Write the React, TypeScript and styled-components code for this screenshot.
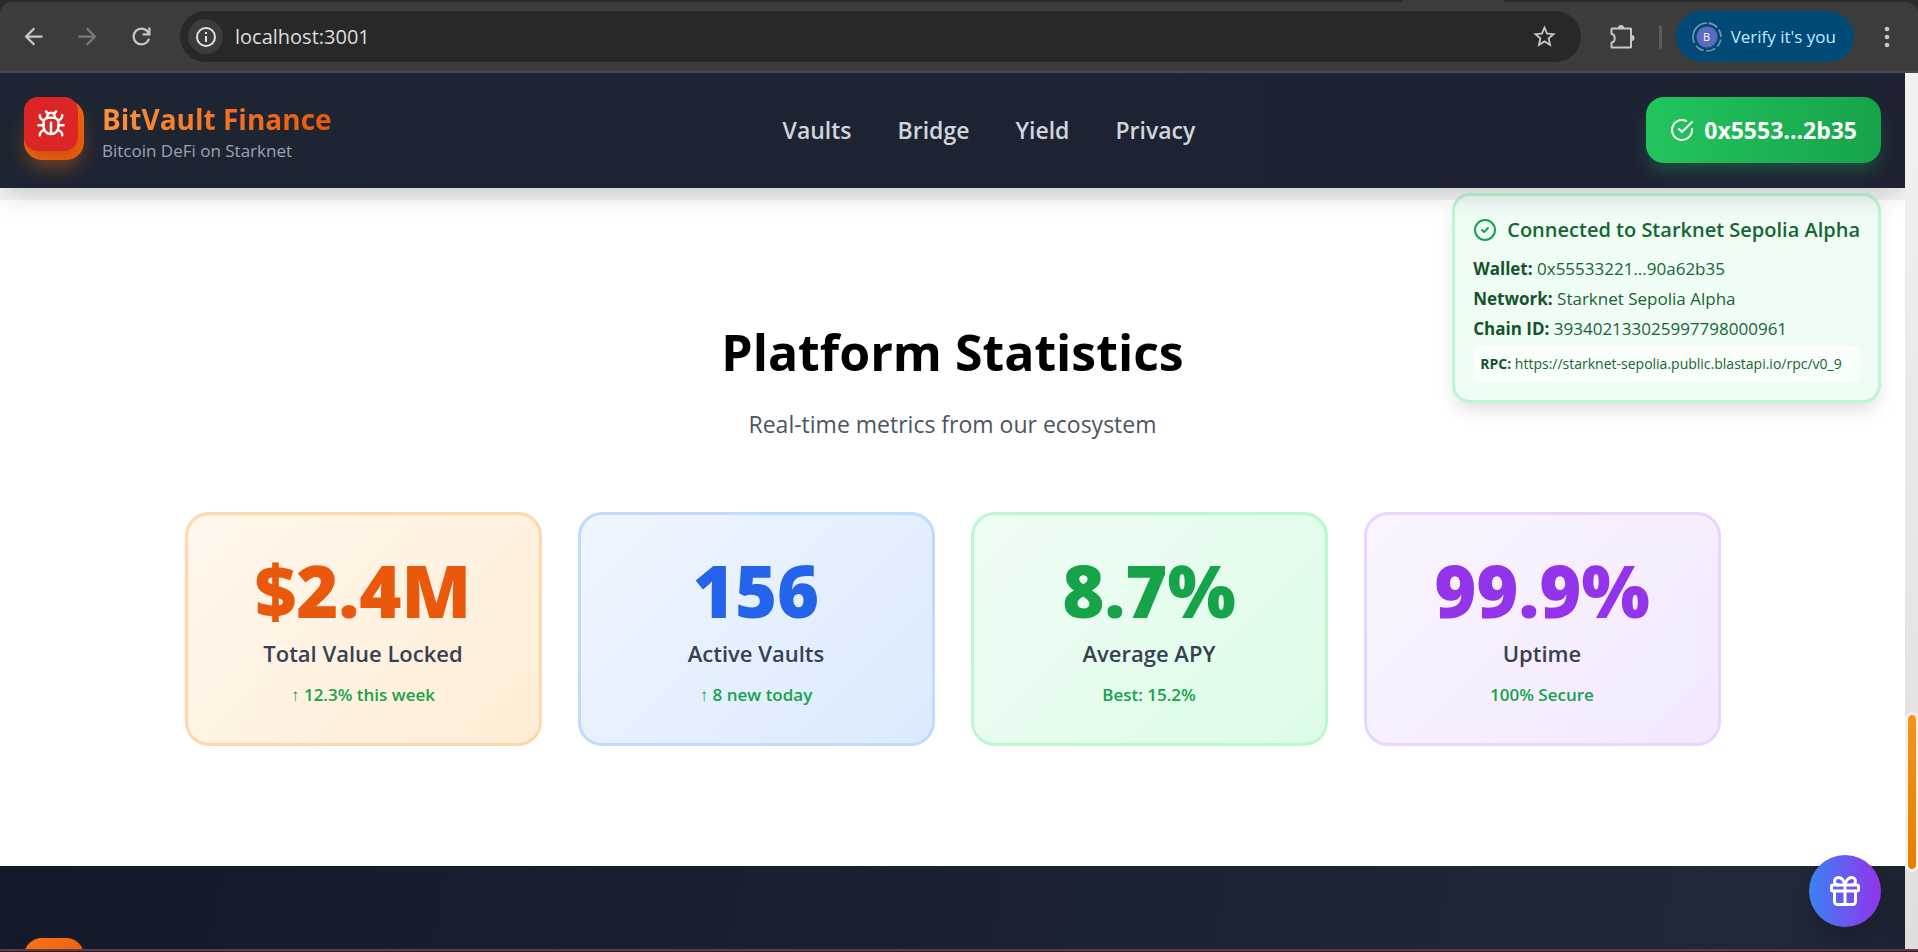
import React from 'react';
import styled, { createGlobalStyle } from 'styled-components';

const GlobalStyle = createGlobalStyle`
  *, *::before, *::after { box-sizing: border-box; }
  body {
    margin: 0;
    background: #fff;
    font-family: "Segoe UI", "Open Sans", "Noto Sans", sans-serif;
  }
  button, input { font: inherit; }
  h1, h2, p { margin: 0; }
`;

const Window = styled.div`
  display: flex;
  flex-direction: column;
  height: 100vh;
  overflow: hidden;
  background: #2b2b2b;
`;

/* Browser chrome */
const TabStrip = styled.div`
  display: flex;
  justify-content: flex-end;
  height: 2px;
  padding-right: 414px;
`;

const ActiveTab = styled.div`
  width: 102px;
  background: #3c3c3c;
`;

const Toolbar = styled.div`
  display: flex;
  align-items: center;
  height: 71px;
  padding: 0 19px 0 20px;
  border-radius: 12px 12px 0 0;
  border-bottom: 2px solid #4a4a4a;
  background: #3c3c3c;
`;

const ToolGroup = styled.div`
  display: flex;
  align-items: center;
  gap: 27px;
  margin-right: 25px;
`;

const ToolButton = styled.button<{ $dim?: boolean }>`
  display: grid;
  place-items: center;
  flex: none;
  padding: 0;
  border: 0;
  background: none;
  color: ${(p) => (p.$dim ? '#7a7a7a' : '#c7c7c7')};
`;

const AddressBar = styled.div`
  display: flex;
  align-items: center;
  flex: 1;
  height: 51px;
  padding: 0 23px 0 8px;
  border-radius: 26px;
  background: #282828;
`;

const SiteInfo = styled(ToolButton)`
  width: 35px;
  height: 35px;
  margin-right: 12px;
  border-radius: 50%;
  background: #3c3c3c;
  color: #e3e3e3;
`;

const UrlInput = styled.input`
  flex: 1;
  min-width: 0;
  padding: 0;
  border: 0;
  outline: 0;
  background: none;
  color: #dedede;
  font-size: 20px;
  line-height: 28px;
`;

const ToolbarEnd = styled.div`
  display: flex;
  align-items: center;
  margin-left: 27px;
`;

const Separator = styled.span`
  width: 3px;
  height: 24px;
  margin: 0 14px 0 23px;
  border-radius: 2px;
  background: #5c5c5c;
`;

const ProfileButton = styled.button`
  display: flex;
  align-items: center;
  gap: 8px;
  height: 51px;
  margin-right: 21px;
  padding: 0 18px 0 15px;
  border: 0;
  border-radius: 26px;
  background: #004a77;
  color: #c2e7ff;
  font-size: 17px;
  line-height: 24px;
  white-space: nowrap;
`;

const Avatar = styled.span`
  display: grid;
  place-items: center;
  width: 32px;
  height: 32px;
  color: #fff;
  font-size: 11px;
  line-height: 16px;
  > * { grid-area: 1 / 1; }
`;

/* Page */
const Viewport = styled.div`
  display: flex;
  flex: 1;
  min-height: 0;
`;

const Page = styled.div`
  position: relative;
  display: flex;
  flex: 1;
  flex-direction: column;
  min-width: 0;
  overflow: hidden;
  background: #fff;
`;

const Header = styled.header`
  position: relative;
  z-index: 2;
  display: flex;
  align-items: center;
  justify-content: space-between;
  flex: none;
  height: 115px;
  padding: 0 24px 2px;
  background: linear-gradient(90deg, #1e2532, #1e2233);
  box-shadow: 0 10px 25px -5px rgba(0, 0, 0, 0.19);
`;

const Brand = styled.div`
  display: flex;
  align-items: center;
  gap: 18px;
`;

const BrandText = styled.div`
  padding-top: 5px;
`;

const LogoBox = styled.div`
  position: relative;
  width: 60px;
  height: 60px;
  border-radius: 18px;
  background: linear-gradient(135deg, #f97316, #ea580c);
  box-shadow: 0 10px 18px -3px rgba(249, 115, 22, 0.4);
`;

const BugButton = styled.button`
  position: absolute;
  top: -3px;
  left: 0;
  display: grid;
  place-items: center;
  width: 54px;
  height: 54px;
  padding: 0;
  border: 0;
  border-radius: 14px;
  background: #dc2626;
  color: #fff;
  box-shadow: 0 8px 14px -4px rgba(0, 0, 0, 0.2);
`;

const BrandName = styled.h1`
  background: linear-gradient(90deg, #fb923c, #ea580c);
  background-clip: text;
  color: transparent;
  font-size: 28px;
  font-weight: 700;
  line-height: 38px;
`;

const Tagline = styled.p`
  color: #9ca3af;
  font-size: 17px;
  line-height: 26px;
`;

const Nav = styled.nav`
  display: flex;
  gap: 46px;
`;

const NavLink = styled.a`
  color: #d1d5db;
  font-size: 23px;
  font-weight: 600;
  line-height: 32px;
  text-decoration: none;
`;

const WalletButton = styled.button`
  display: flex;
  align-items: center;
  gap: 10px;
  height: 66px;
  padding: 0 24px;
  border: 0;
  border-radius: 18px;
  background: linear-gradient(90deg, #22c55e, #16a34a);
  box-shadow: 0 10px 18px -3px rgba(34, 197, 94, 0.3);
  color: #fff;
  font-size: 23px;
  font-weight: 700;
  line-height: 32px;
`;

const WalletCard = styled.aside`
  position: absolute;
  z-index: 1;
  top: 120px;
  right: 24px;
  padding: 18px;
  border: 3px solid #bbf7d0;
  border-radius: 18px;
  background: #f0fdf4;
  box-shadow: 0 10px 18px -3px rgba(0, 0, 0, 0.12);
  color: #166534;
`;

const WalletTitle = styled.h2`
  display: flex;
  align-items: center;
  gap: 10px;
  margin-bottom: 8px;
  color: #166534;
  font-size: 20px;
  font-weight: 600;
  line-height: 32px;
  white-space: nowrap;
  svg { flex: none; color: #16a34a; }
`;

const WalletRow = styled.p`
  font-size: 17px;
  line-height: 30px;
  strong { color: #14532d; }
`;

const RpcRow = styled(WalletRow)`
  margin-top: 2px;
  padding: 3px 7px;
  border-radius: 6px;
  background: rgba(255, 255, 255, 0.5);
  font-size: 14px;
  white-space: nowrap;
`;

const Band = styled.div`
  flex: none;
  height: 12px;
  background: #f3f4f6;
`;

const Section = styled.section`
  flex: none;
  padding: 120px 24px;
  background: #fff;
  text-align: center;
`;

const SectionTitle = styled.h2`
  margin-bottom: 24px;
  color: #000;
  font-size: 50px;
  font-weight: 700;
  line-height: 64px;
`;

const SectionLead = styled.p`
  margin-bottom: 72px;
  color: #4b5563;
  font-size: 23px;
  line-height: 32px;
`;

const StatGrid = styled.div`
  display: grid;
  grid-template-columns: repeat(4, 1fr);
  gap: 36px;
  max-width: 1536px;
  margin: 0 auto;
`;

const StatCard = styled.article<{ $from: string; $to: string; $edge: string }>`
  padding: 36px 36px 34px;
  border: 3px solid ${(p) => p.$edge};
  border-radius: 24px;
  background: linear-gradient(135deg, ${(p) => p.$from}, ${(p) => p.$to});
`;

const StatValue = styled.p<{ $ink: string }>`
  margin-bottom: 6px;
  color: ${(p) => p.$ink};
  font-size: 72px;
  font-weight: 900;
  line-height: 78px;
`;

const StatLabel = styled.p`
  margin-bottom: 10px;
  color: #374151;
  font-size: 22px;
  font-weight: 600;
  line-height: 36px;
`;

const StatNote = styled.p`
  color: #16a34a;
  font-size: 17px;
  font-weight: 600;
  line-height: 28px;
`;

const Footer = styled.footer`
  flex: 1 0 auto;
  padding: 72px 24px;
  background: linear-gradient(100deg, #131928, #1f2937 92%, #1c222f);
`;

const RewardsButton = styled.button`
  position: absolute;
  z-index: 3;
  right: 24px;
  bottom: 25px;
  display: grid;
  place-items: center;
  width: 72px;
  height: 72px;
  padding: 0;
  border: 0;
  border-radius: 50%;
  background: linear-gradient(90deg, #3b82f6, #9333ea);
  box-shadow: 0 10px 18px -3px rgba(0, 0, 0, 0.2);
  color: #fff;
`;

const ScrollTrack = styled.div`
  display: grid;
  grid-template-rows: 639fr 160fr 80fr;
  flex: none;
  width: 13px;
  overflow: hidden;
  background: linear-gradient(#f1f1f1, #dedede);
`;

const ScrollThumb = styled.div`
  grid-row: 2;
  width: 14px;
  border: 3px solid #f1f1f1;
  border-radius: 7px;
  background: linear-gradient(#f7931a, #e67e00) padding-box;
`;

const BottomEdge = styled.div`
  position: absolute;
  z-index: 4;
  right: 0;
  bottom: 0;
  left: 0;
  height: 3px;
  border-top: 2px solid #54404a;
  background: #4a1018;
`;

/* Icons */
type LineProps = { size: number; stroke?: number; children: React.ReactNode };

const LineIcon = ({ size, stroke = 2, children }: LineProps) => (
  <svg width={size} height={size} viewBox="0 0 24 24" fill="none" stroke="currentColor"
    strokeWidth={stroke} strokeLinecap="round" strokeLinejoin="round" aria-hidden="true">
    {children}
  </svg>
);

const SolidIcon = ({ size, d }: { size: number; d: string }) => (
  <svg width={size} height={size} viewBox="0 0 24 24" fill="currentColor" aria-hidden="true">
    <path d={d} />
  </svg>
);

const BACK = 'M20 11H7.83l5.59-5.59L12 4l-8 8 8 8 1.41-1.41L7.83 13H20v-2z';
const FORWARD = 'M4 11h12.17l-5.59-5.59L12 4l8 8-8 8-1.41-1.41L16.17 13H4v-2z';
const RELOAD =
  'M12 20q-3.35 0-5.675-2.325T4 12t2.325-5.675T12 4q1.725 0 3.3.713T18 6.75V4h2v7h-7V9h4.2q-.8-1.4-2.188-2.2T12 6Q9.5 6 7.75 7.75T6 12t1.75 4.25T12 18q1.925 0 3.475-1.1T17.65 14h2.1q-.7 2.65-2.85 4.325T12 20';
const STAR =
  'M22 9.24l-7.19-.62L12 2 9.19 8.63 2 9.24l5.46 4.73L5.82 21 12 17.27 18.18 21l-1.63-7.03L22 9.24zM12 15.4l-3.76 2.27 1-4.28-3.32-2.88 4.38-.38L12 6.1l1.71 4.04 4.38.38-3.32 2.88 1 4.28L12 15.4z';

const InfoIcon = () => (
  <svg width="22" height="22" viewBox="0 0 22 22" fill="none" stroke="currentColor" strokeWidth="2" aria-hidden="true">
    <circle cx="11" cy="11" r="9" />
    <path d="M11 10v6M11 6v2" />
  </svg>
);

const PuzzleIcon = () => (
  <svg width="28" height="28" viewBox="0 0 28 28" fill="none" stroke="currentColor" strokeWidth="2" strokeLinejoin="round" aria-hidden="true">
    <path d="M4 5.5H22.5Q23 5.500 23 6V24Q23 24.500 22.500 24.500H4Q3.500 24.500 3.500 24V19.500C7.800 19 7.800 11.500 3.500 11V6Q3.500 5.500 4 5.500Z" />
    <path d="M10 5a3 3 0 0 1 6 0zM23.500 12a3 3 0 0 1 0 6z" fill="currentColor" stroke="none" />
  </svg>
);

const MenuDots = () => (
  <svg width="24" height="26" viewBox="0 0 24 26" fill="currentColor" aria-hidden="true">
    <circle cx="12" cy="5" r="2.300" />
    <circle cx="12" cy="13" r="2.300" />
    <circle cx="12" cy="21" r="2.300" />
  </svg>
);

const AvatarRing = () => (
  <svg width="32" height="32" viewBox="0 0 32 32" fill="none" aria-hidden="true">
    <circle cx="16" cy="16" r="10.500" fill="#5c6bc0" />
    <circle cx="16" cy="16" r="14" stroke="#7f97a5" strokeWidth="1.600" pathLength={100}
      strokeDasharray="0 2 11 3 9 3 9 3 11 3 10 4 32 0" transform="rotate(-90 16 16)" />
  </svg>
);

const BugIcon = () => (
  <LineIcon size={30}>
    <path d="m8 2 1.880 1.880M14.120 3.880 16 2M9 7.130v-1a3.003 3.003 0 1 1 6 0v1" />
    <path d="M12 20c-3.300 0-6-2.700-6-6v-3a4 4 0 0 1 4-4h4a4 4 0 0 1 4 4v3c0 3.300-2.700 6-6 6M12 20v-9" />
    <path d="M6.530 9C4.600 8.800 3 7.100 3 5M6 13H2M3 21c0-2.100 1.700-3.900 3.800-4" />
    <path d="M20.970 5c0 2.100-1.600 3.800-3.500 4M22 13h-4M17.200 17c2.100.1 3.800 1.900 3.800 4" />
  </LineIcon>
);

const GiftIcon = () => (
  <LineIcon size={36}>
    <rect x="3" y="8" width="18" height="4" rx="1" />
    <path d="M12 8v13M19 12v7a2 2 0 0 1-2 2H7a2 2 0 0 1-2-2v-7" />
    <path d="M7.500 8a2.500 2.500 0 0 1 0-5A4.800 8 0 0 1 12 8a4.800 8 0 0 1 4.500-5 2.500 2.500 0 0 1 0 5" />
  </LineIcon>
);

/* Data */
const NAV_ITEMS = ['Vaults', 'Bridge', 'Yield', 'Privacy'];

const WALLET_ROWS = [
  ['Wallet:', '0x55533221...90a62b35'],
  ['Network:', 'Starknet Sepolia Alpha'],
  ['Chain ID:', '393402133025997798000961'],
];

const STATS = [
  { value: '$2.4M', label: 'Total Value Locked', note: '↑ 12.3% this week', ink: '#ea580c', from: '#fff7ed', to: '#ffedd5', edge: '#fed7aa' },
  { value: '156', label: 'Active Vaults', note: '↑ 8 new today', ink: '#2563eb', from: '#eff6ff', to: '#dbeafe', edge: '#bfdbfe' },
  { value: '8.7%', label: 'Average APY', note: 'Best: 15.2%', ink: '#16a34a', from: '#f0fdf4', to: '#dcfce7', edge: '#bbf7d0' },
  { value: '99.9%', label: 'Uptime', note: '100% Secure', ink: '#9333ea', from: '#faf5ff', to: '#f3e8ff', edge: '#e9d5ff' },
];

const BrowserBar = () => (
  <>
    <TabStrip><ActiveTab /></TabStrip>
    <Toolbar>
      <ToolGroup>
        <ToolButton aria-label="Back"><SolidIcon size={27} d={BACK} /></ToolButton>
        <ToolButton aria-label="Forward" $dim><SolidIcon size={27} d={FORWARD} /></ToolButton>
        <ToolButton aria-label="Reload"><SolidIcon size={27} d={RELOAD} /></ToolButton>
      </ToolGroup>
      <AddressBar>
        <SiteInfo aria-label="View site information"><InfoIcon /></SiteInfo>
        <UrlInput aria-label="Address" defaultValue="localhost:3001" />
        <ToolButton aria-label="Bookmark this tab"><SolidIcon size={27} d={STAR} /></ToolButton>
      </AddressBar>
      <ToolbarEnd>
        <ToolButton aria-label="Extensions"><PuzzleIcon /></ToolButton>
        <Separator />
        <ProfileButton>
          <Avatar><AvatarRing /><span>B</span></Avatar>
          Verify it's you
        </ProfileButton>
        <ToolButton aria-label="Menu"><MenuDots /></ToolButton>
      </ToolbarEnd>
    </Toolbar>
  </>
);

const SiteHeader = () => (
  <Header>
    <Brand>
      <LogoBox>
        <BugButton aria-label="Debug"><BugIcon /></BugButton>
      </LogoBox>
      <BrandText>
        <BrandName>BitVault Finance</BrandName>
        <Tagline>Bitcoin DeFi on Starknet</Tagline>
      </BrandText>
    </Brand>
    <Nav>
      {NAV_ITEMS.map((item) => (
        <NavLink key={item} href={`#${item.toLowerCase()}`}>{item}</NavLink>
      ))}
    </Nav>
    <WalletButton>
      <LineIcon size={24}>
        <path d="M22 11.080V12a10 10 0 1 1-5.930-9.140" />
        <path d="M22 4 12 14.010l-3-3" />
      </LineIcon>
      0x5553...2b35
    </WalletButton>
  </Header>
);

const WalletStatus = () => (
  <WalletCard>
    <WalletTitle>
      <LineIcon size={24}>
        <circle cx="12" cy="12" r="10" />
        <path d="m9 12 2 2 4-4" />
      </LineIcon>
      Connected to Starknet Sepolia Alpha
    </WalletTitle>
    {WALLET_ROWS.map(([name, value]) => (
      <WalletRow key={name}><strong>{name}</strong> {value}</WalletRow>
    ))}
    <RpcRow><strong>RPC:</strong> https://starknet-sepolia.public.blastapi.io/rpc/v0_9</RpcRow>
  </WalletCard>
);

export default function App() {
  return (
    <Window>
      <GlobalStyle />
      <BrowserBar />
      <Viewport>
        <Page>
          <SiteHeader />
          <WalletStatus />
          <Band />
          <Section>
            <SectionTitle>Platform Statistics</SectionTitle>
            <SectionLead>Real-time metrics from our ecosystem</SectionLead>
            <StatGrid>
              {STATS.map((s) => (
                <StatCard key={s.label} $from={s.from} $to={s.to} $edge={s.edge}>
                  <StatValue $ink={s.ink}>{s.value}</StatValue>
                  <StatLabel>{s.label}</StatLabel>
                  <StatNote>{s.note}</StatNote>
                </StatCard>
              ))}
            </StatGrid>
          </Section>
          <Footer><LogoBox /></Footer>
          <RewardsButton aria-label="Rewards"><GiftIcon /></RewardsButton>
        </Page>
        <ScrollTrack><ScrollThumb /></ScrollTrack>
      </Viewport>
      <BottomEdge />
    </Window>
  );
}
